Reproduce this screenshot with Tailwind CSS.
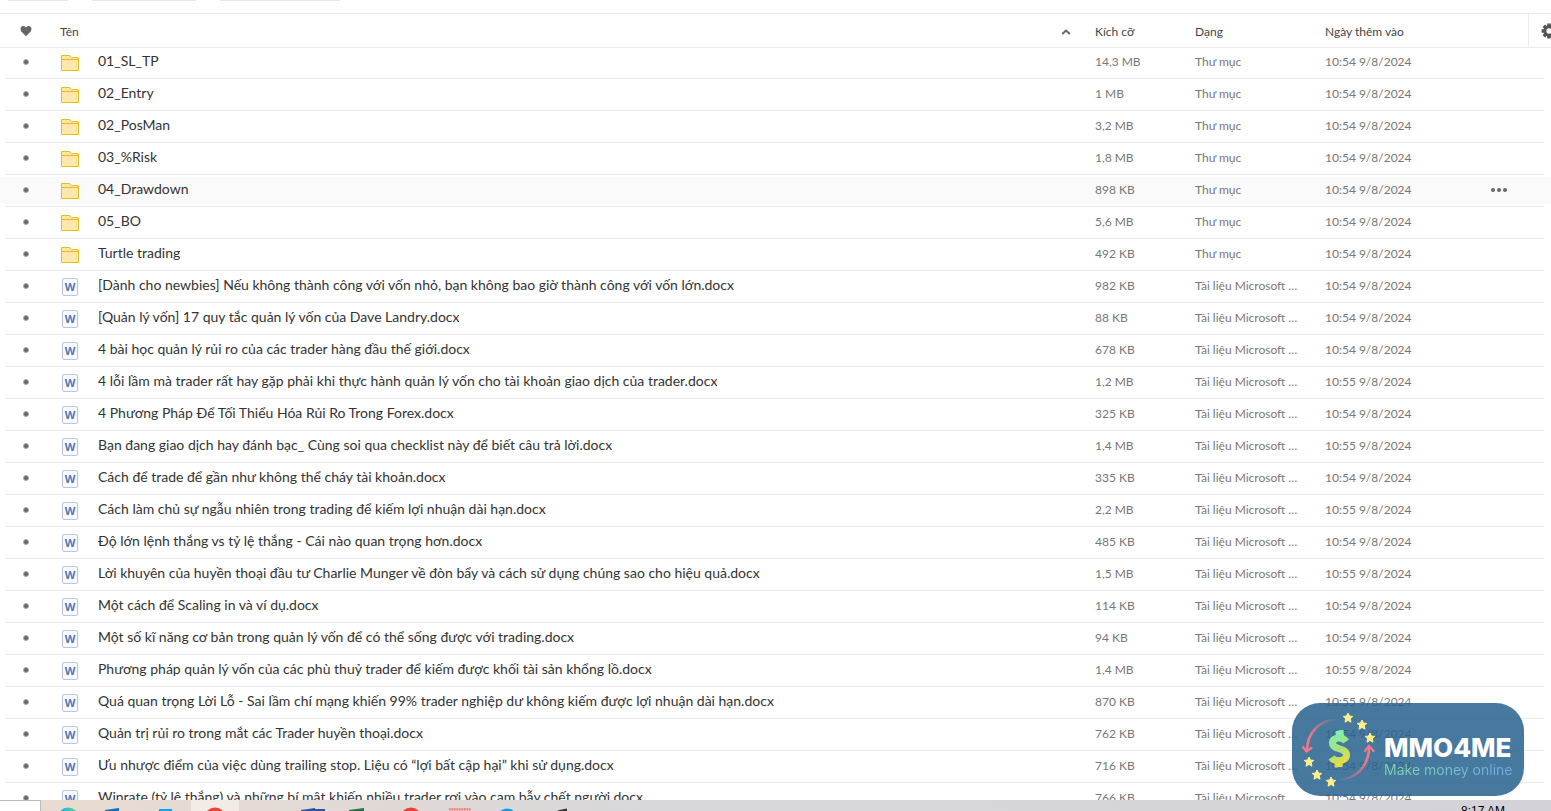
<!DOCTYPE html>
<html lang="vi">
<head>
  <meta charset="UTF-8" />
  <meta name="viewport" content="width=device-width, initial-scale=1.0" />
  <title>Quản lý vốn</title>
  <script src="https://cdn.jsdelivr.net/npm/@tailwindcss/browser@4"></script>
</head>

<body class="relative flex flex-col h-screen overflow-hidden bg-white font-['Lato','Noto_Sans',sans-serif] text-[#333]">
  <!-- Toolbar, scrolled almost out of view -->
  <div class="flex gap-6 h-[13px] shrink-0 px-2">
    <div class="w-[60px] h-px rounded-b bg-[#e6e6e6]"></div>
    <div class="w-[104px] h-px rounded-b bg-[#e6e6e6]"></div>
    <div class="w-[120px] h-px rounded-b bg-[#e6e6e6]"></div>
  </div>

  <!-- File list -->
  <main class="flex-1 min-h-0 overflow-hidden">
    <table class="block w-full">
      <thead class="block">
        <tr class="flex items-center h-[35px] border-y border-[#ebebeb] text-xs text-[#444]">
          <th class="w-[60px] pl-5">
            <svg class="size-3" viewBox="0 0 12 12" fill="#666" role="img" aria-label="Yêu thích"><path d="M6 11.2 1.3 6.4C-.1 4.9.3 1 3.2 1 4.700 1 5.600 1.800 6 2.600 6.400 1.800 7.300 1 8.800 1c2.900 0 3.300 3.900 1.900 5.400z"/></svg>
          </th>
          <th class="flex flex-1 items-center justify-between pt-[2px] pr-6 font-normal">
            Tên
            <svg class="w-[10px] h-[6px]" viewBox="0 0 10 6" fill="none" stroke="#666" stroke-width="2"><path d="M1.200 5 5 1.600 8.800 5"/></svg>
          </th>
          <th class="w-[100px] pt-[2px] text-left font-normal">Kích cỡ</th>
          <th class="w-[130px] pt-[2px] text-left font-normal">Dạng</th>
          <th class="w-[203px] pt-[2px] text-left font-normal">Ngày thêm vào</th>
          <th class="flex items-center w-[23px] h-full overflow-hidden border-l border-[#ebebeb] pl-3">
            <button class="shrink-0" aria-label="Cài đặt">
              <svg class="size-4" viewBox="0 0 16 16" fill="none" stroke="#555"><circle cx="8" cy="8" r="4.200" stroke-width="3"/><path stroke-width="3.600" d="M8 .6v2.500M8 12.900v2.500M.6 8h2.500M12.900 8h2.500M2.800 2.800l1.800 1.800M11.400 11.400l1.800 1.800M2.800 13.200l1.800-1.800M11.400 4.600l1.800-1.800"/></svg>
            </button>
          </th>
        </tr>
      </thead>
      <tbody id="files" class="block -mt-px"></tbody>
    </table>
  </main>

  <!-- Taskbar -->
  <footer class="flex h-[11px] shrink-0 justify-between overflow-hidden bg-linear-to-r from-[#eadbd0] via-[#d9d8da] via-40% to-[#d2d2d8]">
    <div class="flex">
      <div class="w-[41px] border-t border-r border-[#bbb] bg-white"></div>
      <svg class="w-[540px] h-[11px]" viewBox="0 0 540 11">
        <defs>
          <linearGradient id="edge"><stop offset="0.300" stop-color="#25b8e6"/><stop offset="0.700" stop-color="#3fcf9a"/></linearGradient>
        </defs>
        <rect x="150" width="48" height="11" fill="#f3ebe5"/>
        <circle cx="27" cy="18" r="10.500" fill="url(#edge)"/>
        <path d="M64 10 78 8v3H64z" fill="#0f6cbd"/>
        <rect x="118" y="9" width="13" height="2" fill="#00a4ef"/>
        <circle cx="174" cy="18" r="10.500" fill="#ea4335"/>
        <path d="M260 10 274 8v1h10v2h-24z" fill="#2b579a"/>
        <path d="M308 10 323 8v3h-15z" fill="#217346"/>
        <circle cx="370" cy="18" r="10.500" fill="#ea4335"/>
        <path d="M408 11V9.500q0-1 1-1h20q1 0 1 1V11z" fill="#f4b4b4"/>
        <path d="M408 9h22" stroke="#e04848" stroke-dasharray="1.500 1"/>
        <circle cx="466" cy="19" r="10.500" fill="#1e96dc"/>
        <path d="M516 10.500 526 8.500v2.500h-8z" fill="#333"/>
      </svg>
    </div>
    <time class="pr-[46px] pt-[5px] text-xs leading-3 font-['Liberation_Sans',sans-serif] text-black">8:17 AM</time>
  </footer>

  <!-- Watermark badge -->
  <div class="absolute right-[27px] bottom-[15px] flex items-center w-[232px] h-[93px] rounded-[28px] bg-[#27618e]/85">
    <svg class="w-[92px] h-[93px] shrink-0" viewBox="0 0 92 93" fill="none">
      <defs>
        <linearGradient id="dollar" gradientUnits="userSpaceOnUse" x1="38" y1="28" x2="58" y2="62">
          <stop stop-color="#74f2c0"/><stop offset="0.500" stop-color="#a6e37c"/><stop offset="0.850" stop-color="#e6de44"/>
        </linearGradient>
        <linearGradient id="arcDown" gradientUnits="userSpaceOnUse" x1="46" y1="16" x2="16" y2="34">
          <stop stop-color="#f5788a" stop-opacity="0"/><stop offset="1" stop-color="#f5788a"/>
        </linearGradient>
        <linearGradient id="arcUp" gradientUnits="userSpaceOnUse" x1="46" y1="77" x2="76" y2="59">
          <stop stop-color="#f5788a" stop-opacity="0"/><stop offset="1" stop-color="#f5788a"/>
        </linearGradient>
        <path id="star" fill="#ffef8a" stroke="#ffef8a" stroke-linejoin="round" d="M0-5 1.500-1.900 4.800-1.600 2.300.7 3 4.200 0 2.400-3 4.200-2.300.7-4.800-1.600-1.500-1.900z"/>
      </defs>
      <path d="M46 16C28 17 15 29 15 48" stroke="url(#arcDown)" stroke-width="2.500"/>
      <path d="m11 44 3.500 4.500 5-3.500" stroke="#f5788a" stroke-width="2.200" stroke-linecap="round"/>
      <path d="M47 77c17-1 30-14 30-33" stroke="url(#arcUp)" stroke-width="2.500"/>
      <path d="m73 48 4-5 4.500 5" stroke="#f5788a" stroke-width="2.200" stroke-linecap="round"/>
      <path d="M54 38.500c-3-4.500-13.500-5-13.500 1.500 0 7 14 4.500 14 12 0 7-12 7-15 2.500" stroke="url(#dollar)" stroke-width="7"/>
      <path d="M47.500 27.500h3v7M46 64h-3v-7" stroke="url(#dollar)" stroke-width="1"/>
      <path d="m43.500 28 8-1 .5 7h-8zM43 57h8l-.5 7h-7z" fill="url(#dollar)"/>
      <use href="#star" x="56" y="15"/><use href="#star" x="70" y="22"/><use href="#star" x="78" y="35"/>
      <use href="#star" x="17" y="59"/><use href="#star" x="25" y="72"/><use href="#star" x="39" y="79"/>
    </svg>
    <div class="pt-4 whitespace-nowrap font-['Inter',sans-serif]">
      <div class="text-[26px] leading-6 font-extrabold text-white">MMO4ME</div>
      <div class="bg-linear-to-r from-[#7fd6a8] to-[#6fa8e8] bg-clip-text text-[14px] leading-5 text-transparent">Make money online</div>
    </div>
  </div>

  <script>
    const folderIcon = `
      <svg class="w-[18px] h-4" viewBox="0 0 18 16" fill="#f9e7ae" stroke="#e9bd22" role="img" aria-label="Thư mục">
        <path d="M.5 15.500V.5h8l2 2h7v13z"/><path d="M.5 4.500h17"/>
      </svg>`;

    const wordIcon = `
      <svg class="w-4 h-[18px] mx-px" viewBox="0 0 16 18" role="img" aria-label="Word">
        <rect x=".5" y=".5" width="15" height="17" rx="1.500" fill="#f8fafd" stroke="#b5c6de"/>
        <text x="8" y="13" text-anchor="middle" font-family="Open Sans, sans-serif" font-size="11" font-weight="700" fill="#5577ad">W</text>
      </svg>`;

    const menuButton = `
      <button class="flex gap-[2px] pb-px" aria-label="Tùy chọn">
        <span class="size-1 rounded-full bg-[#666]"></span>
        <span class="size-1 rounded-full bg-[#666]"></span>
        <span class="size-1 rounded-full bg-[#666]"></span>
      </button>`;

    // [name, size, date]; names without .docx are folders
    const files = [
      ["01_SL_TP", "14,3 MB", "10:54 9/8/2024"],
      ["02_Entry", "1 MB", "10:54 9/8/2024"],
      ["02_PosMan", "3,2 MB", "10:54 9/8/2024"],
      ["03_%Risk", "1,8 MB", "10:54 9/8/2024"],
      ["04_Drawdown", "898 KB", "10:54 9/8/2024"],
      ["05_BO", "5,6 MB", "10:54 9/8/2024"],
      ["Turtle trading", "492 KB", "10:54 9/8/2024"],
      ["[Dành cho newbies] Nếu không thành công với vốn nhỏ, bạn không bao giờ thành công với vốn lớn.docx", "982 KB", "10:54 9/8/2024"],
      ["[Quản lý vốn] 17 quy tắc quản lý vốn của Dave Landry.docx", "88 KB", "10:54 9/8/2024"],
      ["4 bài học quản lý rủi ro của các trader hàng đầu thế giới.docx", "678 KB", "10:54 9/8/2024"],
      ["4 lỗi lầm mà trader rất hay gặp phải khi thực hành quản lý vốn cho tài khoản giao dịch của trader.docx", "1,2 MB", "10:55 9/8/2024"],
      ["4 Phương Pháp Để Tối Thiểu Hóa Rủi Ro Trong Forex.docx", "325 KB", "10:54 9/8/2024"],
      ["Bạn đang giao dịch hay đánh bạc_ Cùng soi qua checklist này để biết câu trả lời.docx", "1,4 MB", "10:55 9/8/2024"],
      ["Cách để trade để gần như không thể cháy tài khoản.docx", "335 KB", "10:54 9/8/2024"],
      ["Cách làm chủ sự ngẫu nhiên trong trading để kiếm lợi nhuận dài hạn.docx", "2,2 MB", "10:55 9/8/2024"],
      ["Độ lớn lệnh thắng vs tỷ lệ thắng - Cái nào quan trọng hơn.docx", "485 KB", "10:54 9/8/2024"],
      ["Lời khuyên của huyền thoại đầu tư Charlie Munger về đòn bẩy và cách sử dụng chúng sao cho hiệu quả.docx", "1,5 MB", "10:55 9/8/2024"],
      ["Một cách để Scaling in và ví dụ.docx", "114 KB", "10:54 9/8/2024"],
      ["Một số kĩ năng cơ bản trong quản lý vốn để có thể sống được với trading.docx", "94 KB", "10:54 9/8/2024"],
      ["Phương pháp quản lý vốn của các phù thuỷ trader để kiếm được khối tài sản khổng lồ.docx", "1,4 MB", "10:55 9/8/2024"],
      ["Quá quan trọng Lời Lỗ - Sai lầm chí mạng khiến 99% trader nghiệp dư không kiếm được lợi nhuận dài hạn.docx", "870 KB", "10:55 9/8/2024"],
      ["Quản trị rủi ro trong mắt các Trader huyền thoại.docx", "762 KB", "10:54 9/8/2024"],
      ["Ưu nhược điểm của việc dùng trailing stop. Liệu có “lợi bất cập hại” khi sử dụng.docx", "716 KB", "10:54 9/8/2024"],
      ["Winrate (tỷ lệ thắng) và những bí mật khiến nhiều trader rơi vào cạm bẫy chết người.docx", "766 KB", "10:54 9/8/2024"],
    ];

    document.getElementById("files").innerHTML = files.map(([name, size, date]) => {
      const isDoc = name.endsWith(".docx");
      const active = name === "04_Drawdown";
      return `
        <tr class="relative flex items-center h-8 ml-[5px] mr-[7px] border-b border-[#ebebeb] text-xs text-[#777] ${active ? "before:absolute before:-z-10 before:-left-[5px] before:-right-[7px] before:top-[2px] before:bottom-[2px] before:bg-[#fafafa]" : ""}">
          <td class="w-14 pl-[18px] pb-[2px]"><span class="block size-[6px] rounded-full border border-[#aaa] bg-[#666]"></span></td>
          <td class="flex flex-1 items-center gap-[19px] min-w-0">
            <span class="shrink-0">${isDoc ? wordIcon : folderIcon}</span>
            <a href="#" class="truncate pb-1 text-sm text-[#333]">${name}</a>
          </td>
          <td class="w-[100px] pb-px">${size}</td>
          <td class="w-[130px] pb-px pr-6 truncate">${isDoc ? "Tài liệu Microsoft Word" : "Thư mục"}</td>
          <td class="w-[166px] pb-px">${date}</td>
          <td class="w-[53px]">${active ? menuButton : ""}</td>
        </tr>`;
    }).join("");
  </script>
</body>
</html>
